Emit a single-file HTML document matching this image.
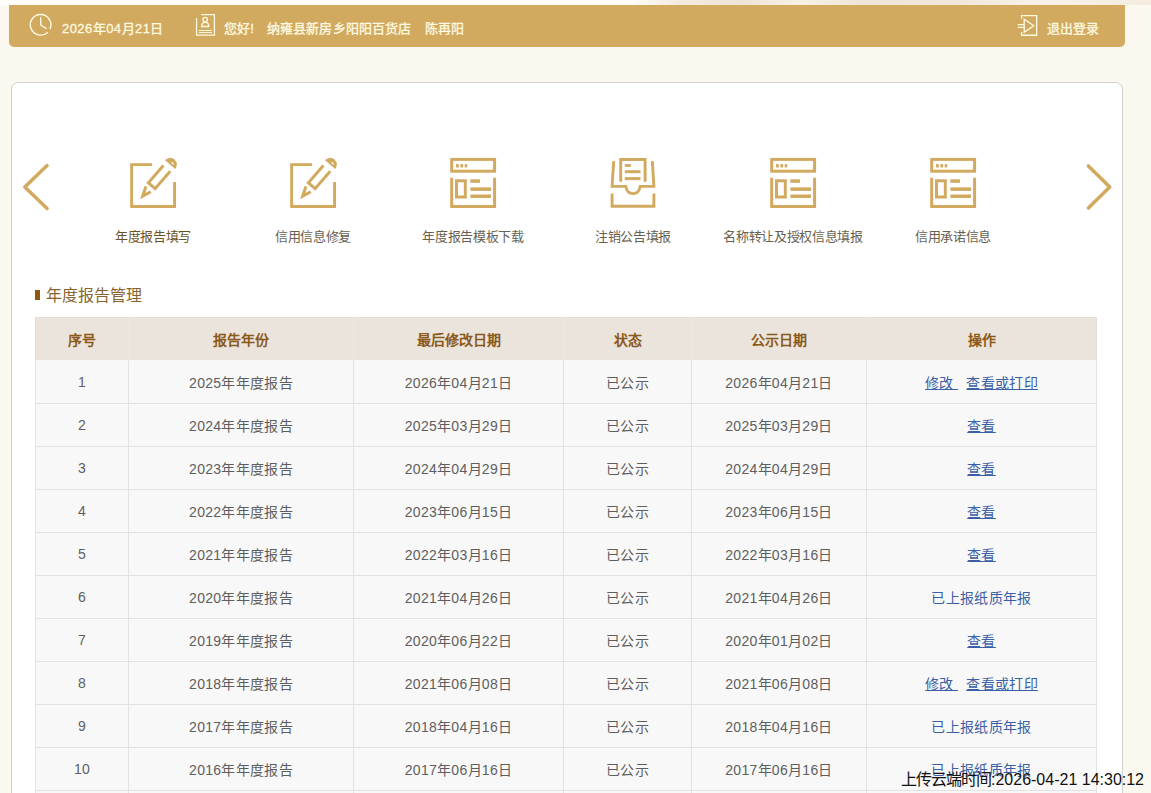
<!DOCTYPE html>
<html lang="zh-CN">
<head>
<meta charset="utf-8">
<title>年度报告管理</title>
<style>
*{box-sizing:border-box;margin:0;padding:0}
html,body{width:1151px;height:793px;overflow:hidden}
body{position:relative;background:#fbf8f0;font-family:"Liberation Sans",sans-serif;font-size:14px;color:#555}
.topstrip{position:absolute;left:0;top:0;width:1151px;height:5px;background:linear-gradient(90deg,#fefdfa 0,#fefdfa 630px,#f3ebde 680px,#efe5d5 740px,#f6f0e6 800px,#efe6d7 860px,#f1e8da 960px,#f7f2e9 1040px,#f3ecdf 1151px)}
.bar{position:absolute;left:9px;top:5px;width:1116px;height:42px;background:#d1aa60;border-radius:0 0 5px 5px;color:#fffae2;font-size:13px}
.bar span{position:absolute;top:3px;-webkit-text-stroke:0.28px #fffae2;letter-spacing:0.12px;line-height:42px;height:42px;white-space:nowrap}
.bar svg{position:absolute;overflow:visible}
.panel{position:absolute;left:11px;top:82px;width:1112px;height:760px;background:#fff;border:1px solid #d2d0ca;border-radius:7px}
.nav{position:absolute;top:0;left:0}
.item{position:absolute;top:145px;width:160px;text-align:center}
.item svg{position:absolute;left:57px;top:13px;overflow:visible}
.item p{position:absolute;left:0;width:160px;top:82px;line-height:20px;font-size:13px;letter-spacing:-0.35px;color:#666152;white-space:nowrap}
.item.on p{color:#6e5223}
.arrow{position:absolute;overflow:visible}
.sect{position:absolute;left:35px;top:285px;height:22px;line-height:22px;font-size:16px;color:#8a642c;white-space:nowrap}
.sect i{position:absolute;left:0;top:5px;width:5px;height:10px;background:#8b5713}
.sect b{font-weight:normal;margin-left:11px}
table{position:absolute;left:35px;top:317px;width:1062px;border-collapse:collapse;table-layout:fixed}
th{height:43px;background:#ebe4dc;color:#8b5a1b;font-weight:bold;font-size:14px;text-align:center;border:1px solid #ede7e0;border-top-color:#e6dfd7;border-bottom:0;padding-top:0}
th:first-child{border-left-color:#e6dfd7}
th:last-child{border-right-color:#e6dfd7}
td{height:43px;background:#f8f8f8;border:1px solid #e2e2e2;text-align:center;font-size:14px;color:#5e5e5e;white-space:nowrap;letter-spacing:0.3px}
tr.first td{border-top-color:#f6f6f6}
td a{color:#3a5fa6;text-decoration:underline}
td em{font-style:normal;color:#3a5fa6}
.stamp{position:absolute;left:901px;top:769px;height:22px;line-height:22px;font-size:16px;color:#111;white-space:nowrap}
.stamp b{font-weight:normal;letter-spacing:-1px}
</style>
</head>
<body>
<div class="topstrip"></div>

<div class="bar">
  <svg style="left:20px;top:8px" width="24" height="24" viewBox="0 0 24 24" fill="none" stroke="#fffae2" stroke-width="1.4" stroke-linecap="round" stroke-linejoin="round">
    <path d="M18.6 19.4 A10.3 10.3 0 1 1 21.2 15.6"/>
    <path d="M11.7 4.8 V12 L17 15.4"/>
  </svg>
  <span style="left:53px;letter-spacing:0.45px">2026年04月21日</span>
  <svg style="left:186px;top:9px" width="22" height="24" viewBox="0 0 22 24" fill="none" stroke="#fffae2" stroke-width="1.3">
    <path d="M6.1 0.65 H19.4 V21.2 H1.55 V4"/>
    <circle cx="10.2" cy="5.6" r="2.2"/>
    <path d="M6.6 12.5 C6.6 9.5 8 8.4 10.2 8.4 C12.4 8.4 13.8 9.5 13.8 12.5 Z"/>
    <path d="M3.9 16.5 H17 M3.9 18.6 H17" stroke-width="1"/>
  </svg>
  <span style="left:215px">您好!</span>
  <span style="left:258px">纳雍县新房乡阳阳百货店</span>
  <span style="left:416px">陈再阳</span>
  <svg style="left:1008px;top:9px" width="22" height="23" viewBox="0 0 22 23" fill="none" stroke="#fffae2" stroke-width="1.3">
    <path d="M4.55 4.7 V1.55 H19.65 V21.25 H4.55 V18"/>
    <path d="M0.7 10.7 H7.2 M0.7 13.3 H7.2" stroke-width="1.2"/>
    <path d="M7.2 5.2 L16.8 11.8 L7.2 18.2 Z"/>
  </svg>
  <span style="left:1038px">退出登录</span>
</div>

<div class="panel"></div>

<div class="nav">
  <svg class="arrow" style="left:20px;top:160px" width="34" height="56" viewBox="0 0 34 56" fill="none" stroke="#d1aa60" stroke-width="3.5" stroke-linecap="round" stroke-linejoin="round">
    <path d="M27.1 5.6 L4.8 27 L27.1 48.6"/>
  </svg>
  <svg class="arrow" style="left:1082px;top:160px" width="34" height="56" viewBox="0 0 34 56" fill="none" stroke="#d1aa60" stroke-width="3.5" stroke-linecap="round" stroke-linejoin="round">
    <path d="M6.4 5.9 L27.7 27 L6.4 48.1"/>
  </svg>
  <div class="item on" style="left:73px">
    <svg width="46" height="50" viewBox="0 0 46 50" fill="none" stroke="#d1aa60" stroke-width="2.9">
      <path d="M22.1 6.6 H1.65 V48.5 H44.6 V24.1"/>
      <path d="M15.9 28.6 L12.7 38.1 L20.8 33.7" stroke-width="3"/>
      <path d="M33.4 7.5 L18.4 24.8 L25.1 30.7 L40.2 13.3" stroke-width="3"/>
      <path d="M35.0 2.2 A6.7 6.7 0 0 1 45.2 11.0 Z" fill="#d1aa60" stroke="none"/>
      <ellipse cx="42.6" cy="5.4" rx="0.7" ry="1.6" transform="rotate(-35 42.6 5.4)" fill="#fff" stroke="none"/>
    </svg>
    <p>年度报告填写</p>
  </div>
  <div class="item" style="left:233px">
    <svg width="46" height="50" viewBox="0 0 46 50" fill="none" stroke="#d1aa60" stroke-width="2.9">
      <path d="M22.1 6.6 H1.65 V48.5 H44.6 V24.1"/>
      <path d="M15.9 28.6 L12.7 38.1 L20.8 33.7" stroke-width="3"/>
      <path d="M33.4 7.5 L18.4 24.8 L25.1 30.7 L40.2 13.3" stroke-width="3"/>
      <path d="M35.0 2.2 A6.7 6.7 0 0 1 45.2 11.0 Z" fill="#d1aa60" stroke="none"/>
      <ellipse cx="42.6" cy="5.4" rx="0.7" ry="1.6" transform="rotate(-35 42.6 5.4)" fill="#fff" stroke="none"/>
    </svg>
    <p>信用信息修复</p>
  </div>
  <div class="item" style="left:393px">
    <svg width="46" height="50" viewBox="0 0 46 50" fill="none" stroke="#d1aa60" stroke-width="3">
      <rect x="1.7" y="1.4" width="42.9" height="11.8"/>
      <path d="M1.7 19.8 V48.5 H44.6 V19.8"/>
      <rect x="6.5" y="22.8" width="8.8" height="16.2"/>
      <g fill="#d1aa60" stroke="none">
        <rect x="6" y="6.1" width="2.8" height="3.4"/><rect x="10.4" y="6.1" width="2.8" height="3.4"/><rect x="14.7" y="6.1" width="2.6" height="3.4"/>
        <rect x="20.4" y="21.3" width="9.6" height="3.5"/><rect x="20.4" y="29.4" width="20.6" height="3.5"/><rect x="20.4" y="36.5" width="20.6" height="3.5"/>
      </g>
    </svg>
    <p>年度报告模板下载</p>
  </div>
  <div class="item" style="left:553px">
    <svg width="46" height="50" viewBox="0 0 46 50" fill="none" stroke="#d1aa60" stroke-width="2.9">
      <path d="M10.7 23.8 V1.5 H35.1 V23.8"/>
      <path d="M3.7 3.1 L2.1 28.4 H15.8 C16.5 33 19.5 35.6 23 35.6 C26.5 35.6 29.5 33 30.2 28.4 H43.9 L42.3 3.1"/>
      <path d="M2.1 35.4 V48.2 H43.9 V35.4"/>
      <g fill="#d1aa60" stroke="none">
        <rect x="14.8" y="6.1" width="6.1" height="2.8"/><rect x="14.8" y="12.2" width="15.7" height="3"/><rect x="14.8" y="19.1" width="15.7" height="3"/>
      </g>
    </svg>
    <p>注销公告填报</p>
  </div>
  <div class="item" style="left:713px">
    <svg width="46" height="50" viewBox="0 0 46 50" fill="none" stroke="#d1aa60" stroke-width="3">
      <rect x="1.7" y="1.4" width="42.9" height="11.8"/>
      <path d="M1.7 19.8 V48.5 H44.6 V19.8"/>
      <rect x="6.5" y="22.8" width="8.8" height="16.2"/>
      <g fill="#d1aa60" stroke="none">
        <rect x="6" y="6.1" width="2.8" height="3.4"/><rect x="10.4" y="6.1" width="2.8" height="3.4"/><rect x="14.7" y="6.1" width="2.6" height="3.4"/>
        <rect x="20.4" y="21.3" width="9.6" height="3.5"/><rect x="20.4" y="29.4" width="20.6" height="3.5"/><rect x="20.4" y="36.5" width="20.6" height="3.5"/>
      </g>
    </svg>
    <p>名称转让及授权信息填报</p>
  </div>
  <div class="item" style="left:873px">
    <svg width="46" height="50" viewBox="0 0 46 50" fill="none" stroke="#d1aa60" stroke-width="3">
      <rect x="1.7" y="1.4" width="42.9" height="11.8"/>
      <path d="M1.7 19.8 V48.5 H44.6 V19.8"/>
      <rect x="6.5" y="22.8" width="8.8" height="16.2"/>
      <g fill="#d1aa60" stroke="none">
        <rect x="6" y="6.1" width="2.8" height="3.4"/><rect x="10.4" y="6.1" width="2.8" height="3.4"/><rect x="14.7" y="6.1" width="2.6" height="3.4"/>
        <rect x="20.4" y="21.3" width="9.6" height="3.5"/><rect x="20.4" y="29.4" width="20.6" height="3.5"/><rect x="20.4" y="36.5" width="20.6" height="3.5"/>
      </g>
    </svg>
    <p>信用承诺信息</p>
  </div>
</div>

<div class="sect"><i></i><b>年度报告管理</b></div>

<table>
  <colgroup><col style="width:93px"><col style="width:225px"><col style="width:210px"><col style="width:128px"><col style="width:175px"><col style="width:230px"></colgroup>
  <tr><th>序号</th><th>报告年份</th><th>最后修改日期</th><th>状态</th><th>公示日期</th><th>操作</th></tr>
  <tr class="first"><td>1</td><td>2025年年度报告</td><td>2026年04月21日</td><td>已公示</td><td>2026年04月21日</td><td><a>修改&nbsp;</a>&nbsp;&nbsp;<a>查看或打印</a></td></tr>
  <tr><td>2</td><td>2024年年度报告</td><td>2025年03月29日</td><td>已公示</td><td>2025年03月29日</td><td><a>查看</a></td></tr>
  <tr><td>3</td><td>2023年年度报告</td><td>2024年04月29日</td><td>已公示</td><td>2024年04月29日</td><td><a>查看</a></td></tr>
  <tr><td>4</td><td>2022年年度报告</td><td>2023年06月15日</td><td>已公示</td><td>2023年06月15日</td><td><a>查看</a></td></tr>
  <tr><td>5</td><td>2021年年度报告</td><td>2022年03月16日</td><td>已公示</td><td>2022年03月16日</td><td><a>查看</a></td></tr>
  <tr><td>6</td><td>2020年年度报告</td><td>2021年04月26日</td><td>已公示</td><td>2021年04月26日</td><td><em>已上报纸质年报</em></td></tr>
  <tr><td>7</td><td>2019年年度报告</td><td>2020年06月22日</td><td>已公示</td><td>2020年01月02日</td><td><a>查看</a></td></tr>
  <tr><td>8</td><td>2018年年度报告</td><td>2021年06月08日</td><td>已公示</td><td>2021年06月08日</td><td><a>修改&nbsp;</a>&nbsp;&nbsp;<a>查看或打印</a></td></tr>
  <tr><td>9</td><td>2017年年度报告</td><td>2018年04月16日</td><td>已公示</td><td>2018年04月16日</td><td><em>已上报纸质年报</em></td></tr>
  <tr><td>10</td><td>2016年年度报告</td><td>2017年06月16日</td><td>已公示</td><td>2017年06月16日</td><td><em>已上报纸质年报</em></td></tr>
  <tr><td>11</td><td>2015年年度报告</td><td>2016年06月20日</td><td>已公示</td><td>2016年06月20日</td><td><em>已上报纸质年报</em></td></tr>
</table>

<div class="stamp"><b>上传云端时间</b>:2026-04-21 14:30:12</div>
</body>
</html>
